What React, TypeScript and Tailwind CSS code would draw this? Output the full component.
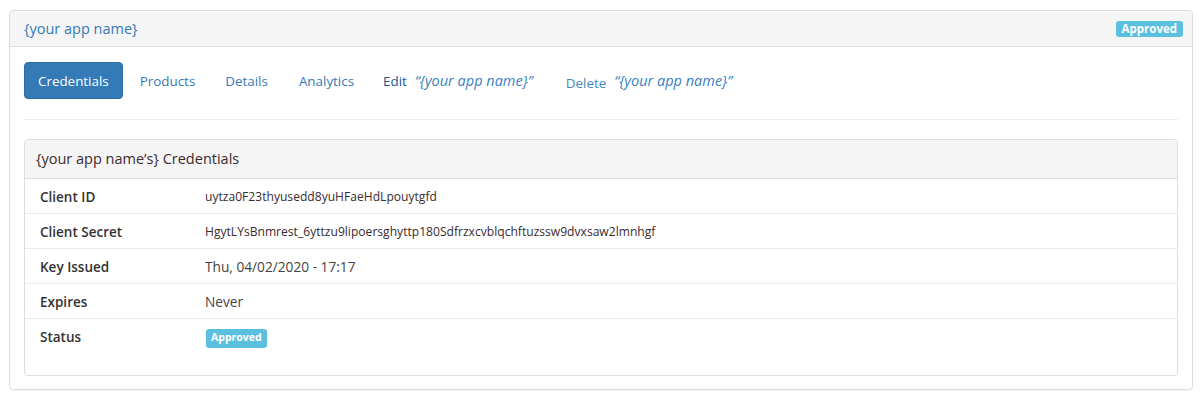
import React from "react";

export default function App() {
  const font = { fontFamily: '"Open Sans", "Noto Sans", Arial, sans-serif' };
  return (
    <div className="w-[1200px] h-[394px] bg-white pl-[9px] pr-[7px] pt-[10px]" style={font}>
      <div className="border border-[#dddddd] rounded-[4px] shadow-[0_1px_1px_rgba(0,0,0,0.05)]">
        <div className="h-[36px] bg-[#f5f5f5] border-b border-[#dddddd] rounded-t-[4px] flex items-center justify-between pl-[14px] pr-[9px]">
          <span className="text-[14.5px] text-[#337ab7]">{"{your app name}"}</span>
          <span className="bg-[#5bc0de] text-white text-[11.5px] font-bold leading-none px-[6px] h-[16px] flex items-center rounded-[3px]">
            Approved
          </span>
        </div>
        <div className="px-[14px] pt-[15px] pb-[13px]">
          <div className="flex items-center gap-[2px]">
            <span className="h-[37px] px-[13px] pt-[1px] flex items-center bg-[#337ab7] text-white text-[13.4px] rounded-[4px] border border-[#2e6da4]">
              Credentials
            </span>
            <span className="h-[37px] pl-[15px] pr-[14px] pt-[1px] flex items-center text-[#337ab7] text-[13.4px]">Products</span>
            <span className="h-[37px] px-[14px] pt-[1px] flex items-center text-[#337ab7] text-[13.4px]">Details</span>
            <span className="h-[37px] px-[15px] pt-[1px] flex items-center text-[#337ab7] text-[13.4px]">Analytics</span>
            <span className="h-[37px] pl-[12px] pt-[1px] flex items-center text-[#15598f] text-[13.4px]">
              Edit
              <span className="ml-[8px] italic font-medium text-[14.5px] text-[#3a7fc0]">{"“{your app name}”"}</span>
            </span>
            <span className="h-[37px] pl-[31px] pt-[1px] flex items-center text-[13.4px] text-[#4188c4]">
              <span className="mt-[5px]">Delete</span>
              <span className="ml-[8px] italic font-medium text-[14.5px] text-[#3a7fc0]">{"“{your app name}”"}</span>
            </span>
          </div>
          <div className="mt-[20px] border-t border-[#eeeeee]" />
          <div className="mt-[19px] border border-[#dddddd] rounded-[4px]">
            <div className="h-[39px] bg-[#f5f5f5] border-b border-[#dddddd] rounded-t-[4px] flex items-center pl-[11px] text-[14.5px] text-[#3b2b30]">
              {"{your app name’s} Credentials"}
            </div>
            <div className="pb-[21px]">
              <Row label="Client ID">
                <span className="text-[12.1px] text-[#3b2b30]">uytza0F23thyusedd8yuHFaeHdLpouytgfd</span>
              </Row>
              <Row label="Client Secret">
                <span className="text-[12.1px] text-[#3b2b30]">
                  HgytLYsBnmrest_6yttzu9lipoersghyttp180Sdfrzxcvblqchftuzssw9dvxsaw2lmnhgf
                </span>
              </Row>
              <Row label="Key Issued">
                <span className="text-[13.7px] text-[#444]">Thu, 04/02/2020 - 17:17</span>
              </Row>
              <Row label="Expires">
                <span className="text-[13.7px] text-[#444]">Never</span>
              </Row>
              <Row label="Status" last>
                <span className="ml-[1px] mt-[1px] bg-[#5bc0de] text-white text-[10.5px] font-bold h-[19px] px-[5px] flex items-center rounded-[3px]">
                  Approved
                </span>
              </Row>
            </div>
          </div>
        </div>
      </div>
    </div>
  );
}

function Row({ label, children, last }: { label: string; children: React.ReactNode; last?: boolean }) {
  return (
    <div className={`h-[35px] flex items-center px-[15px] pt-[2px] ${last ? "" : "border-b border-[#e9e9e9]"}`}>
      <div className="w-[165px] text-[13.5px] font-semibold text-[#333]">{label}</div>
      <div className="flex">{children}</div>
    </div>
  );
}
